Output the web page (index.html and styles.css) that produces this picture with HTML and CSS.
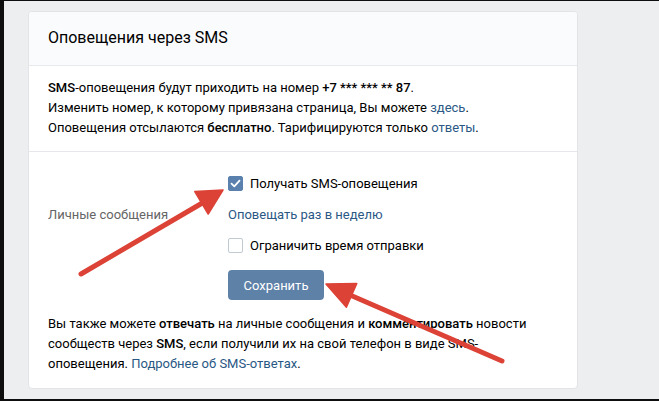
FILE: index.html
```html
<!DOCTYPE html>
<html lang="ru">
<head>
    <meta charset="UTF-8">
    <meta name="viewport" content="width=device-width, initial-scale=1.0">
    <title>Оповещения через SMS</title>
    <link rel="stylesheet" href="styles.css">
</head>
<body>
    <div class="screen">
        <div class="card">
            <div class="card-header">Оповещения через SMS</div>

            <!-- информация о номере -->
            <div class="info">
                <b>SMS</b>-оповещения будут приходить на номер <b>+7 *** *** ** 87</b>.<br>
                Изменить номер, к которому привязана страница, Вы можете <a href="#">здесь</a>.<br>
                Оповещения отсылаются <b>бесплатно</b>. Тарифицируются только <a href="#">ответы</a>.
            </div>

            <!-- настройки -->
            <div class="settings">
                <div class="settings-grid">
                    <div class="row value">
                        <span class="checkbox checked">
                            <svg width="11" height="9" viewBox="0 0 11 9"><path d="M1.5 4.6l2.8 2.7 5.2-5.6" fill="none" stroke="#fff" stroke-width="1.8" stroke-linecap="round" stroke-linejoin="round"/></svg>
                        </span>
                        Получать SMS-оповещения
                    </div>
                    <div class="row label">Личные сообщения</div>
                    <div class="row value"><a href="#">Оповещать раз в неделю</a></div>
                    <div class="row value">
                        <span class="checkbox"></span>
                        Ограничить время отправки
                    </div>
                    <div class="value">
                        <button type="button">Сохранить</button>
                    </div>
                </div>

                <p class="note">
                    Вы также можете <b>отвечать</b> на личные сообщения и <b>комментировать</b> новости<br>
                    сообществ через <b>SMS</b>, если получили их на свой телефон в виде SMS-<br>
                    оповещения. <a href="#">Подробнее об SMS-ответах</a>.
                </p>
            </div>
        </div>

        <!-- стрелки поверх скриншота -->
        <svg class="arrows" width="659" height="401" viewBox="0 0 659 401">
            <g fill="#dc4236" stroke="#dc4236" stroke-linecap="round" stroke-linejoin="round">
                <line x1="81" y1="274" x2="204" y2="202" stroke-width="5"/>
                <polygon points="223,190 194.8,191.6 208.2,214" stroke-width="1.5"/>
                <line x1="502" y1="361" x2="350" y2="295" stroke-width="5"/>
                <polygon points="326,284 356.8,283.4 346.4,307.2" stroke-width="1.5"/>
            </g>
        </svg>
    </div>
</body>
</html>
```

FILE: styles.css
```css
body {
    margin: 0;
    font-family: Roboto, "Open Sans", Arial, sans-serif;
    font-size: 13px;
    color: #000;
}
.screen {
    position: relative;
    box-sizing: border-box;
    width: 659px;
    height: 401px;
    background: #edeef0;
    border-left: 4px solid #0e0e0e;
    border-top: 1px solid #0e0e0e;
    border-bottom: 2px solid #0e0e0e;
    padding: 10px 0 0 24px;
    overflow: hidden;
}
.card {
    box-sizing: border-box;
    width: 550px;
    height: 378px;
    background: #fff;
    border: 1px solid #e3e4e8;
    border-radius: 4px;
    overflow: hidden;
}
.card-header {
    height: 53px;
    line-height: 52px;
    padding-left: 19px;
    font-size: 16px;
    background: #fafbfc;
    border-bottom: 1px solid #e7e8ec;
}
.info {
    padding: 12px 19px 13px;
    line-height: 20px;
    border-bottom: 1px solid #e7e8ec;
}
a {
    color: #2a5885;
    text-decoration: none;
}
b {
    font-weight: 500;
}
.settings {
    padding: 16px 19px 0;
}
.settings-grid {
    display: grid;
    grid-template-columns: 180px 1fr;
}
.row {
    height: 31px;
    display: flex;
    align-items: center;
}
.value {
    grid-column: 2;
}
.label {
    grid-column: 1;
    grid-row: 2;
    color: #656565;
}
.checkbox {
    box-sizing: border-box;
    width: 15px;
    height: 15px;
    margin-right: 7px;
    border: 1px solid #c1c9d1;
    border-radius: 2px;
    background: #fff;
    display: flex;
    align-items: center;
    justify-content: center;
}
.checkbox.checked {
    background: #5a80ad;
    border-color: #5a80ad;
}
button {
    margin-top: 9px;
    width: 96px;
    height: 30px;
    border: 0;
    border-radius: 4px;
    background: #5e81a8;
    color: #fff;
    font-family: inherit;
    font-size: 13px;
    padding: 0;
}
.note {
    margin: 14px 0 0;
    line-height: 20px;
}
.arrows {
    position: absolute;
    left: -4px;
    top: -1px;
}
```
